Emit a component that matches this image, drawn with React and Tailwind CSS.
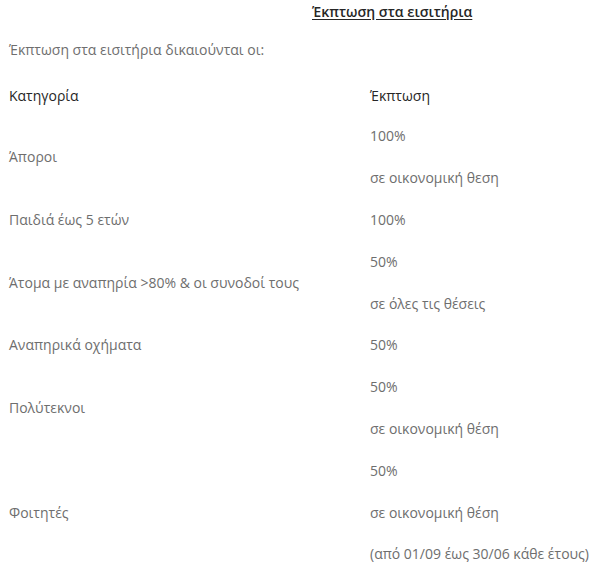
import React from "react";

const rows = [
  { cat: "Άποροι", vals: ["100%", "σε οικονομική θεση"] },
  { cat: "Παιδιά έως 5 ετών", vals: ["100%"] },
  { cat: "Άτομα με αναπηρία >80% & οι συνοδοί τους", vals: ["50%", "σε όλες τις θέσεις"] },
  { cat: "Αναπηρικά οχήματα", vals: ["50%"] },
  { cat: "Πολύτεκνοι", vals: ["50%", "σε οικονομική θέση"] },
  { cat: "Φοιτητές", vals: ["50%", "σε οικονομική θέση", "(από 01/09 έως 30/06 κάθε έτους)"] },
];

export default function App() {
  return (
    <div
      className="w-[600px] h-[568px] bg-white overflow-hidden text-[14px] text-[#6e6e6e]"
      style={{ fontFamily: '"Open Sans", "Noto Sans", sans-serif' }}
    >
      <div className="h-[23px] flex items-center pl-[312px]">
        <span className="font-semibold text-[#262626] underline underline-offset-2">
          Έκπτωση στα εισιτήρια
        </span>
      </div>
      <div className="h-[53px] flex items-center pl-[9px]">
        Έκπτωση στα εισιτήρια δικαιούνται οι:
      </div>
      <div className="grid grid-cols-[361px_1fr] pl-[9px]">
        <div className="h-[39px] flex items-center font-medium text-[#262626]">Κατηγορία</div>
        <div className="h-[39px] flex items-center font-medium text-[#262626]">Έκπτωση</div>
        {rows.map((r, i) => (
          <React.Fragment key={i}>
            <div className="flex items-center">{r.cat}</div>
            <div className="flex flex-col">
              {r.vals.map((v, j) => (
                <div key={j} className="h-[41.8px] flex items-center whitespace-nowrap">
                  {v}
                </div>
              ))}
            </div>
          </React.Fragment>
        ))}
      </div>
    </div>
  );
}
